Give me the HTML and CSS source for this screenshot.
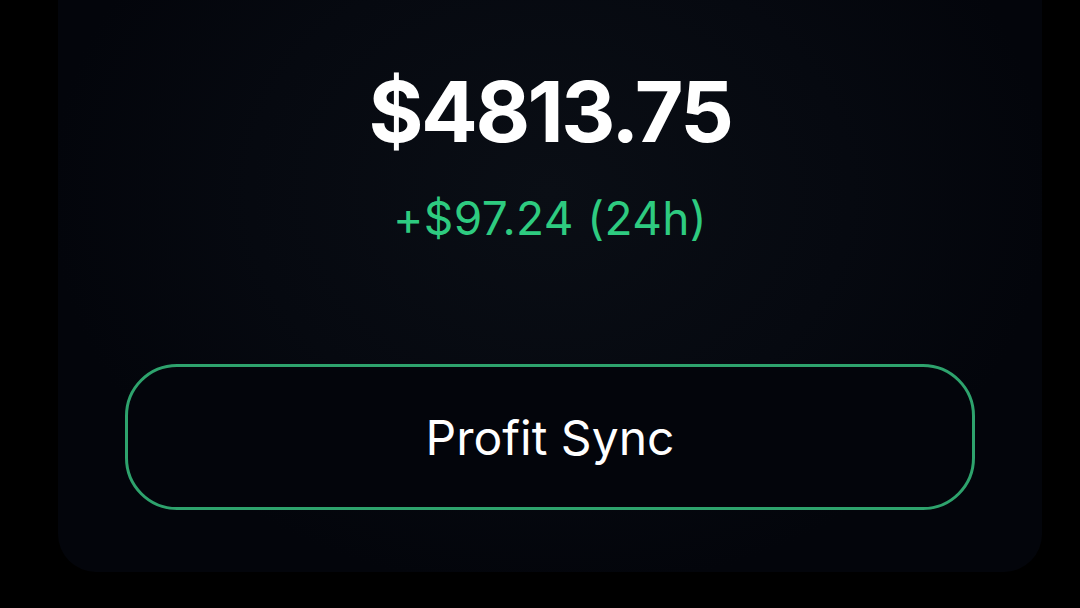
FILE: index.html
```html
<!DOCTYPE html>
<html>
<head><meta charset="utf-8"/>
<title>Balance</title>
<link rel="stylesheet" href="styles.css">
</head>
<body>
<div class="card">
    <div class="balance">$4813.75</div>
    <div class="change">+$97.24 (24h)</div>
    <button class="sync">Profit Sync</button>
</div>
</body>
</html>
```

FILE: styles.css
```css
body { margin: 0px; border: 0px; padding: 0px; background: #000000; height: 608px; overflow: hidden; } /* go fullpage */

.card {
    margin: -40px 38px 0 58px;
    height: 612px;
    padding-top: 110px;
    box-sizing: border-box;
    border-radius: 38px;
    background: radial-gradient(ellipse 500px 400px at 50% 38%, #0a0e15 0%, #060910 60%, #03050b 100%);
    display: flex;
    flex-direction: column;
    align-items: center;
    font-family: Inter, "Noto Sans", sans-serif;
}

.balance {
    color: #ffffff;
    font-size: 84px;
    font-weight: 700;
    line-height: 84px;
    letter-spacing: -2.5px;
}

.change {
    color: #2ecb80;
    font-size: 46px;
    line-height: 46px;
    letter-spacing: 0.4px;
    margin-top: 41px;
}

.sync {
    margin-top: 123px;
    width: 850px;
    height: 146px;
    border: 3px solid #2ea36d;
    border-radius: 52px;
    background: #03050b;
    color: #ffffff;
    font-family: Inter, "Noto Sans", sans-serif;
    font-size: 48px;
    cursor: pointer;
}
```
